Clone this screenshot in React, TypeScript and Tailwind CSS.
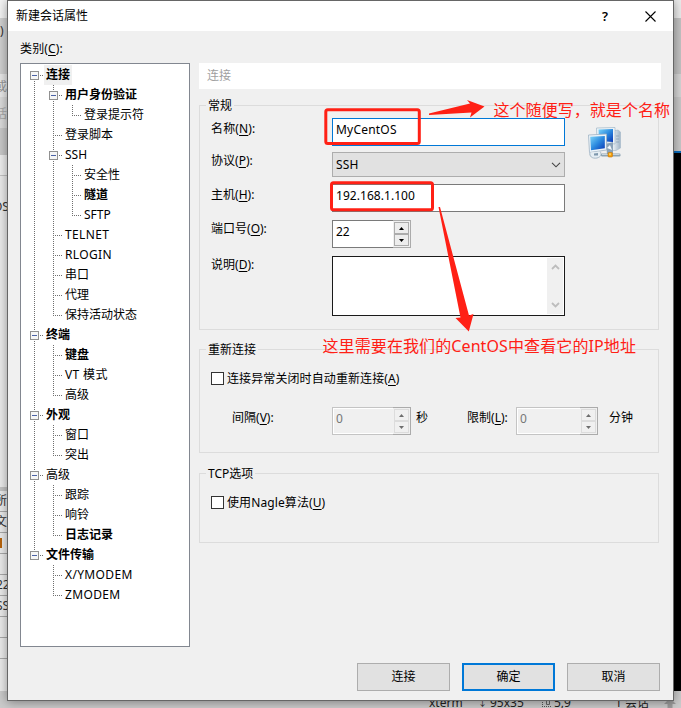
import React from 'react';
import clsx from 'clsx';

type Guide = 'pipe' | 'tee' | 'end' | 'first' | 'none';

interface TreeRow {
  label: string;
  guides: Guide[];
  open?: boolean;
  bold?: boolean;
  selected?: boolean;
  wide?: boolean;
}

const treeRows: TreeRow[] = [
  { label: '连接', guides: ['first'], open: true, bold: true, selected: true },
  { label: '用户身份验证', guides: ['pipe', 'tee'], open: true, bold: true },
  { label: '登录提示符', guides: ['pipe', 'pipe', 'end'] },
  { label: '登录脚本', guides: ['pipe', 'tee'] },
  { label: 'SSH', guides: ['pipe', 'tee'], open: true },
  { label: '安全性', guides: ['pipe', 'pipe', 'tee'] },
  { label: '隧道', guides: ['pipe', 'pipe', 'tee'], bold: true },
  { label: 'SFTP', guides: ['pipe', 'pipe', 'end'] },
  { label: 'TELNET', guides: ['pipe', 'tee'], wide: true },
  { label: 'RLOGIN', guides: ['pipe', 'tee'], wide: true },
  { label: '串口', guides: ['pipe', 'tee'] },
  { label: '代理', guides: ['pipe', 'tee'] },
  { label: '保持活动状态', guides: ['pipe', 'end'] },
  { label: '终端', guides: ['tee'], open: true, bold: true },
  { label: '键盘', guides: ['pipe', 'tee'], bold: true },
  { label: 'VT 模式', guides: ['pipe', 'tee'], wide: true },
  { label: '高级', guides: ['pipe', 'end'] },
  { label: '外观', guides: ['tee'], open: true, bold: true },
  { label: '窗口', guides: ['pipe', 'tee'] },
  { label: '突出', guides: ['pipe', 'end'] },
  { label: '高级', guides: ['tee'], open: true },
  { label: '跟踪', guides: ['pipe', 'tee'] },
  { label: '响铃', guides: ['pipe', 'tee'] },
  { label: '日志记录', guides: ['pipe', 'end'], bold: true },
  { label: '文件传输', guides: ['end'], open: true, bold: true },
  { label: 'X/YMODEM', guides: ['none', 'tee'], wide: true },
  { label: 'ZMODEM', guides: ['none', 'end'], wide: true },
];

const GuideCell = ({ kind, box }: { kind: Guide; box: boolean }) => (
  <svg width="19" height="20" viewBox="0 0 19 20" className="shrink-0" shapeRendering="crispEdges">
    <g stroke="#6f6f6f" strokeWidth="1" strokeDasharray="1 1" fill="none">
      {(kind === 'pipe' || kind === 'tee') && <path d="M9.5 0V20" />}
      {kind === 'end' && <path d="M9.5 0V11" />}
      {kind === 'first' && <path d="M9.5 10V20" />}
      {kind !== 'pipe' && kind !== 'none' && <path d="M9 10.5H18" />}
    </g>
    {box && (
      <>
        <rect x="5" y="6" width="10" height="9" fill="#fff" />
        <rect x="5.5" y="6.5" width="8" height="8" fill="#f6f6f6" stroke="#919191" />
        <path d="M7 10.5H12" stroke="#4b63a7" />
      </>
    )}
  </svg>
);

const Label = ({ text, hotkey, className }: { text: string; hotkey: string; className?: string }) => (
  <span className={clsx('shrink-0 whitespace-nowrap', className)}>
    {text}(<span className="underline decoration-1 underline-offset-2">{hotkey}</span>):
  </span>
);

const Group = ({ title, className, children }: { title: string; className: string; children: React.ReactNode }) => (
  <div className={clsx('w-[460px] border border-[#dcdcdc]', className)}>
    <div className="-mt-[9px] -mb-[9px] ml-[6px] h-[18px] w-fit bg-[#f0f0f0] px-[2px] leading-[18px]">{title}</div>
    {children}
  </div>
);

const Spinner = ({ value, disabled, className }: { value: string; disabled?: boolean; className: string }) => (
  <div
    className={clsx(
      'flex h-[28px] shrink-0 border',
      disabled ? 'border-[#c4c4c4] bg-[#f0f0f0] text-[#777]' : 'border-[#7a7a7a] bg-white',
      className,
    )}
  >
    <div
      className={clsx(
        'h-[26px] flex-1',
        disabled ? 'border border-r-0 border-white pl-[2px] leading-[20px]' : 'pl-[3px] leading-[22px]',
      )}
    >
      {value}
    </div>
    <div className="-my-px -mr-px flex w-[18px] flex-col border border-l-0 border-[#ababab] bg-[#f0f0f0] p-px">
      {['M3 6L5.5 3L8 6Z', 'M3 3L5.5 6L8 3Z'].map((d) => (
        <div
          key={d}
          className={clsx(
            'flex flex-1 items-center justify-center border',
            disabled ? 'border-[#dcdcdc]' : 'border-[#acacac] bg-[#ededed]',
          )}
        >
          <svg width="11" height="9" viewBox="0 0 11 9">
            <path d={d} fill={disabled ? '#6d6d6d' : '#000'} />
          </svg>
        </div>
      ))}
    </div>
  </div>
);

const Checkbox = ({ text, hotkey }: { text: string; hotkey: string }) => (
  <div className="flex items-center gap-[3px] pl-[11px]">
    <span className="h-[13px] w-[13px] border border-[#333] bg-white" />
    <span className="leading-[13px] tracking-[0.1px]">
      {text}(<span className="underline decoration-1 underline-offset-2">{hotkey}</span>)
    </span>
  </div>
);

const NetworkIcon = () => (
  <svg width="33" height="33" viewBox="0 0 33 33" className="ml-[23px] mt-[9px] shrink-0">
    <defs>
      <linearGradient id="screen" x1="0" y1="0" x2="1" y2="1">
        <stop offset="0" stopColor="#7fd6f8" />
        <stop offset="0.5" stopColor="#2c8be0" />
        <stop offset="1" stopColor="#0a38b4" />
      </linearGradient>
      <linearGradient id="tower" x1="0" y1="0" x2="1" y2="0">
        <stop offset="0" stopColor="#f4f8fb" />
        <stop offset="1" stopColor="#9fb4c6" />
      </linearGradient>
    </defs>
    <path d="M25 4L30 3L32.5 5V21L28 23.500H24Z" fill="url(#tower)" stroke="#a9bccb" strokeWidth="0.700" />
    <path d="M28 9H31M28 12H31M28 15H31" stroke="#8ba2b6" strokeWidth="0.800" />
    <path d="M8.500 1L27 0.500V17L9 15Z" fill="#eef4f8" stroke="#a8bccb" strokeWidth="0.800" />
    <path d="M10.500 2.500L25 2V15L11 14Z" fill="url(#screen)" />
    <path d="M18 17L25 15V27H19Z" fill="#8ba3b8" />
    <path d="M19 21L22 18L24 23Z" fill="#f3f8fc" />
    <path d="M0.500 8L18.500 7V23L1.500 25.500Z" fill="#edf4f9" stroke="#9eb3c4" strokeWidth="0.800" />
    <path d="M2.200 9.800L16.800 9V21.300L3 23.300Z" fill="url(#screen)" />
    <path d="M2 25.500C1 29 4 32 9 31C13 30 14 27 12 24.500" fill="#e4edf3" stroke="#a6b8c6" strokeWidth="1" />
    <path d="M6 26.500L10 26V28.500H6Z" fill="#7f98ad" />
    <rect x="13" y="26.500" width="19.500" height="3" rx="1.200" fill="#8ea4b4" />
    <path d="M14 27.500H31.500" stroke="#d8e3ea" strokeWidth="0.800" />
    <rect x="20" y="25.500" width="4.500" height="4.500" rx="1" fill="#f39b0c" stroke="#c8780c" strokeWidth="0.600" />
    <rect x="21" y="26.300" width="2" height="2" fill="#ffd056" />
  </svg>
);

const Annotations = () => (
  <div className="pointer-events-none absolute inset-0 text-[16px] leading-[20px] text-[#ff2015]">
    <svg width="681" height="708" viewBox="0 0 681 708" className="absolute inset-0">
      <g fill="none" stroke="#ff2015" strokeWidth="3">
        <rect x="325.800" y="109.800" width="93.500" height="33.800" rx="2" />
        <rect x="331.500" y="182.800" width="101" height="27" rx="2" />
      </g>
      <path d="M429 113.500L470 103.500L467 100L484.500 106.500L470 117.500L471.500 112.500L429 115Z" fill="#ff2015" />
      <path d="M438.500 207L440 207L469 315.500L473.500 314L468.800 331.500L455.500 318L460.500 317.500Z" fill="#ff2015" />
    </svg>
    <span className="absolute left-[493.5px] top-[100px] whitespace-nowrap tracking-[0.05px]">这个随便写，就是个名称</span>
    <span className="absolute left-[322.5px] top-[336px] whitespace-nowrap tracking-[0.1px]">
      这里需要在我们的CentOS中查看它的IP地址
    </span>
  </div>
);

// Parts of the main window that stay visible around the dialog
const MainWindow = () => (
  <div className="flex h-[708px] w-[681px] flex-col overflow-hidden bg-[#e4e4e4] text-[#333]">
    <div className="flex h-[691px] justify-between">
      <div className="flex w-[20px] flex-col overflow-hidden whitespace-nowrap">
        <div className="h-[18px] bg-[#f4f4f4]" />
        <div className="h-[56px] bg-[#d1d1d1] pt-[4px] leading-[18px]">)</div>
        <div className="h-[23px] bg-[#e9e9e9] pt-[4px] leading-[18px] text-[#999]">
          <span className="-ml-[5px]">或</span>
        </div>
        <div className="h-[31px] bg-[#dcdcdc] pt-[8px] leading-[18px] text-[#aaa]">
          <span className="-ml-[5px]">话</span>
        </div>
        <div className="h-[27px] bg-[#c9c9c9]" />
        <div className="h-[21px] border-b border-[#c4c4c4] bg-[#efefef]" />
        <div className="h-[311px] bg-[#ececec] pt-[22px] leading-[18px]">
          <span className="-ml-[7px]">OS</span>
        </div>
        <div className="h-[4px] bg-[#c4c4c4]" />
        {['所', '文', '', '', '22', 'SS', '', ''].map((text, i) => (
          <div key={i} className="flex h-[21px] shrink-0 items-center border-b border-[#aaa] bg-[#ececec]">
            {i === 2 ? <span className="h-[10px] w-[2px] bg-[#b8640c]" /> : <span className={i < 2 ? '-ml-[5px]' : '-ml-[4px]'}>{text}</span>}
          </div>
        ))}
        <div className="flex-1 bg-[#ececec]" />
      </div>
      <div className="flex w-[20px] flex-col">
        <div className="h-[18px] bg-[#ececec]" />
        <div className="h-[56px] bg-[#c4c4c4]" />
        <div className="h-[23px] bg-[#d6d6d6]" />
        <div className="h-[54px] bg-[#c9c9c9]" />
        <div className="h-[2px] bg-[#0a6fc0]" />
        <div className="flex-1 bg-black" />
      </div>
    </div>
    <div className="flex h-[17px] bg-[#cbcbcb] pl-[429px] pt-[3px] leading-[18px] text-[#222]">
      <span className="w-[49px]">xterm</span>
      <span className="w-[12px] text-[9px]">↓</span>
      <span className="w-[52px]">95x35</span>
      <svg width="12" height="14" viewBox="0 0 12 14" className="shrink-0">
        <path d="M.5 6V13M0 12.500H10" stroke="#555" strokeDasharray="1 1" fill="none" />
        <path d="M4.500 5V10.500H7.500V5" stroke="#666" fill="none" />
      </svg>
      <span className="w-[61px]">5,9</span>
      <span className="w-[48px] whitespace-nowrap">1 会话</span>
      <svg width="14" height="14" viewBox="0 0 14 14" className="shrink-0">
        <path d="M7 4L13 10H9.500V14H4.500V10H1Z" fill="#9b9b9b" />
      </svg>
    </div>
  </div>
);

const SessionDialog = () => (
  <div className="absolute left-[7px] top-0 flex h-[701px] w-[667px] flex-col border border-[#666] bg-[#f0f0f0] shadow-[0_1px_10px_rgba(0,0,0,0.4)]">
    <div className="flex h-[30px] items-center bg-white pl-[8px]">
      <span className="flex-1">新建会话属性</span>
      <span className="w-[43px] text-[13px] font-semibold">?</span>
      <svg width="11" height="11" viewBox="0 0 11 11" className="mr-[17px]">
        <path d="M.5 .5L10.500 10.500M10.500 .5L.5 10.500" stroke="#000" strokeWidth="1.100" />
      </svg>
    </div>
    <Label text="类别" hotkey="C" className="h-[32px] pl-[12px] pt-[9px] leading-[18px] tracking-[0.15px]" />
    <div className="flex pl-[12px]">
      <div className="h-[584px] w-[170px] border border-[#828790] bg-white pl-1 pt-px">
        {treeRows.map((row, i) => (
          <div key={i} className="flex h-[20px]">
            {row.guides.map((kind, level) => (
              <GuideCell key={level} kind={kind} box={!!row.open && level === row.guides.length - 1} />
            ))}
            <span
              className={clsx(
                'whitespace-nowrap px-[2px] leading-[20px]',
                row.bold && 'font-bold',
                row.wide && 'tracking-[0.35px]',
                row.selected && 'bg-[#f0f0f0]',
              )}
            >
              {row.label}
            </span>
          </div>
        ))}
      </div>

      <div className="ml-[9px] w-[462px]">
        <div className="h-[26px] bg-white pl-[8px] leading-[26px] text-[#a0a0a0]">连接</div>

        <Group title="常规" className="mt-[16px] h-[225px]">
          <div className="flex pl-[11px] pt-[12px]">
            <Label text="名称" hotkey="N" className="w-[121px] leading-[22px] tracking-[0.15px]" />
            <div className="h-[28px] w-[233px] border border-[#0078d7] bg-white pl-[3px] leading-[22px] tracking-[0.2px]">
              MyCentOS
            </div>
            <div className="h-0">
              <NetworkIcon />
            </div>
          </div>
          <div className="mt-[6px] flex pl-[11px]">
            <Label text="协议" hotkey="P" className="w-[121px] leading-[18px]" />
            <div className="flex h-[25px] w-[233px] items-center justify-between border border-[#adadad] bg-[#e1e1e1] pl-[3px] pr-[3px]">
              <span className="tracking-[0.2px]">SSH</span>
              <svg width="10" height="6" viewBox="0 0 10 6">
                <path d="M1 .8L5 4.800L9 .8" stroke="#444" strokeWidth="1.100" fill="none" />
              </svg>
            </div>
          </div>
          <div className="mt-[7px] flex pl-[11px]">
            <Label text="主机" hotkey="H" className="w-[121px] leading-[22px]" />
            <div className="h-[28px] w-[233px] border border-[#7a7a7a] bg-white pl-[3px] leading-[22px] tracking-[0.05px]">
              192.168.1.100
            </div>
          </div>
          <div className="mt-[8px] flex pl-[11px]">
            <Label text="端口号" hotkey="O" className="w-[121px] leading-[18px]" />
            <Spinner value="22" className="w-[79px]" />
          </div>
          <div className="mt-[8px] flex pl-[11px]">
            <Label text="说明" hotkey="D" className="w-[121px] leading-[18px]" />
            <div className="flex h-[60px] w-[233px] justify-end border border-[#1a1a1a] bg-white p-px">
              <div className="flex w-[16px] flex-col items-center justify-between bg-[#f0f0f0] py-[6px]">
                <svg width="9" height="6" viewBox="0 0 9 6">
                  <path d="M1 5L4.500 1.500L8 5" stroke="#bdbdbd" strokeWidth="1.800" fill="none" />
                </svg>
                <svg width="9" height="6" viewBox="0 0 9 6">
                  <path d="M1 1L4.500 4.500L8 1" stroke="#bdbdbd" strokeWidth="1.800" fill="none" />
                </svg>
              </div>
            </div>
          </div>
        </Group>

        <Group title="重新连接" className="mt-[19px] h-[104px]">
          <div className="h-[57px] pt-[22px]">
            <Checkbox text="连接异常关闭时自动重新连接" hotkey="A" />
          </div>
          <div className="flex pl-[32px] leading-[22px]">
            <Label text="间隔" hotkey="V" className="w-[100px]" />
            <Spinner value="0" disabled className="w-[79px]" />
            <span className="w-[56px] pl-[5px]">秒</span>
            <Label text="限制" hotkey="L" className="w-[49px]" />
            <Spinner value="0" disabled className="w-[82px]" />
            <span className="pl-[11px]">分钟</span>
          </div>
        </Group>

        <Group title="TCP选项" className="mt-[20px] h-[70px]">
          <div className="pt-[22px]">
            <Checkbox text="使用Nagle算法" hotkey="U" />
          </div>
        </Group>
      </div>
    </div>

    <div className="mt-[16px] flex justify-end gap-3 pr-[13px]">
      <button className="h-[28px] w-[93px] border border-[#adadad] bg-[#e1e1e1]">连接</button>
      <button className="h-[28px] w-[93px] border-2 border-[#0078d7] bg-[#e1e1e1]">确定</button>
      <button className="h-[28px] w-[93px] border border-[#adadad] bg-[#e1e1e1]">取消</button>
    </div>
  </div>
);

const App: React.FC = () => {
  return (
    <div className="relative h-[708px] w-[681px] overflow-hidden font-['Noto_Sans','Noto_Sans_CJK_SC',sans-serif] text-[12px] leading-[18px] text-black">
      <MainWindow />
      <SessionDialog />
      <Annotations />
    </div>
  );
};

export default App;
